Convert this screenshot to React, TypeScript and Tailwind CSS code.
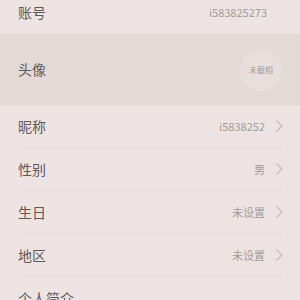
const Chevron = () => (
  <svg width="9" height="14" viewBox="0 0 9 14" className="ml-[10px] mr-[-2px]">
    <path d="M1.5 1.5 L7 7 L1.5 12.5" fill="none" stroke="#c4bcbb" strokeWidth="1.2" />
  </svg>
)

const Row = ({ label, value, arrow = true, last = false }: { label: string; value?: string; arrow?: boolean; last?: boolean }) => (
  <div className="px-[18px]">
    <div className={"flex h-[43px] items-center justify-between " + (last ? "" : "border-b border-[#e5dbda]")}>
      <span className="text-[14px] text-[#5f5a59]">{label}</span>
      <span className="flex items-center">
        {value && <span className="text-[11px] text-[#a39d9c]">{value}</span>}
        {arrow && <Chevron />}
      </span>
    </div>
  </div>
)

const App = () => {
  return (
    <div className="h-[300px] w-[300px] overflow-hidden bg-[#ede3e2]" style={{ fontFamily: '"Noto Sans CJK SC", "Noto Sans", sans-serif' }}>
      <div className="flex h-[34px] items-center justify-between px-[18px] pb-[10px]">
        <span className="text-[14px] text-[#5f5a59]">账号</span>
        <span className="mr-[15px] text-[11px] text-[#a39d9c]">i583825273</span>
      </div>
      <div className="flex h-[71px] items-center justify-between bg-[#e3d9d7] pl-[18px] pr-[18px]">
        <span className="text-[14px] text-[#5f5a59]">头像</span>
        <div className="flex h-[42px] w-[42px] items-center justify-center rounded-full bg-[#e8dfdd]">
          <span className="text-[8px] text-[#a39d9c]">未截相</span>
        </div>
      </div>
      <Row label="昵称" value="i5838252" />
      <Row label="性别" value="男" />
      <Row label="生日" value="未设置" />
      <Row label="地区" value="未设置" />
      <Row label="个人简介" arrow={false} last />
    </div>
  )
}

export default App
